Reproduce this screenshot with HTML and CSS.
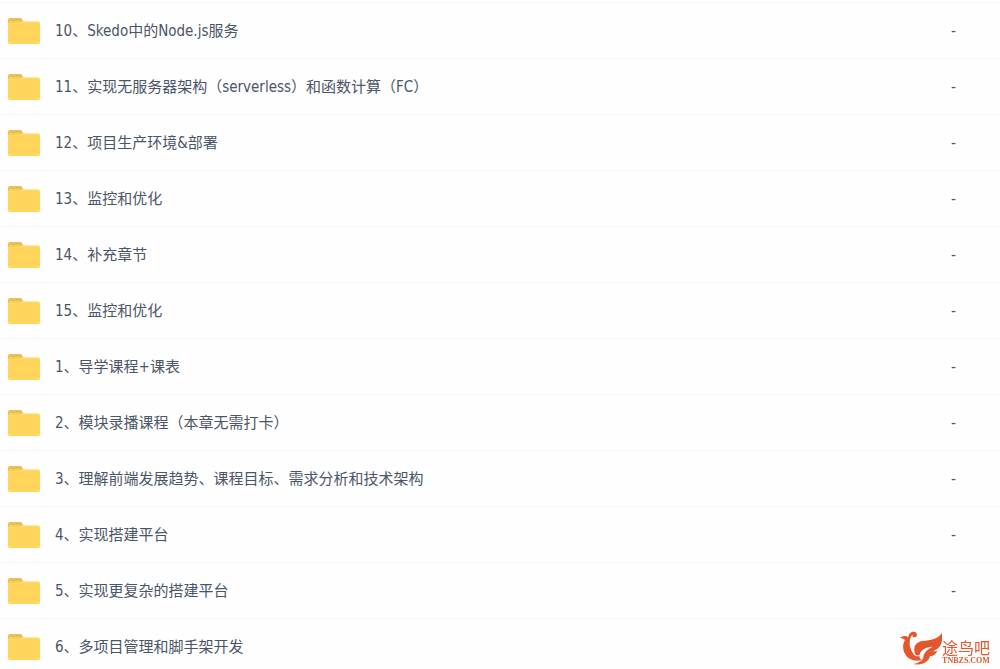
FILE: index.html
```html
<!DOCTYPE html>
<html lang="zh-CN">
<head>
    <meta charset="UTF-8">
    <meta name="viewport" content="width=device-width, initial-scale=1.0">
    <title>课程目录</title>
    <link rel="stylesheet" href="styles.css">
</head>
<body>
    <!-- Folder shape shared by all rows -->
    <svg class="sprite" aria-hidden="true">
        <symbol id="folder" viewBox="0 0 32 26">
            <path fill="#e6bf55" d="M0 8V2Q0 0 2 0H12Q13.500 0 14.200 1.400L15.500 4V8Z"/>
            <rect fill="#ffd55c" y="3.500" width="32" height="22.500" rx="2"/>
        </symbol>
    </svg>

    <table class="file-list">
        <tbody>
            <tr><td class="name"><a href="#"><svg class="folder"><use href="#folder"/></svg>10、Skedo中的Node.js服务</a></td><td class="size">-</td></tr>
            <tr><td class="name"><a href="#"><svg class="folder"><use href="#folder"/></svg>11、实现无服务器架构（serverless）和函数计算（FC）</a></td><td class="size">-</td></tr>
            <tr><td class="name"><a href="#"><svg class="folder"><use href="#folder"/></svg>12、项目生产环境&amp;部署</a></td><td class="size">-</td></tr>
            <tr><td class="name"><a href="#"><svg class="folder"><use href="#folder"/></svg>13、监控和优化</a></td><td class="size">-</td></tr>
            <tr><td class="name"><a href="#"><svg class="folder"><use href="#folder"/></svg>14、补充章节</a></td><td class="size">-</td></tr>
            <tr><td class="name"><a href="#"><svg class="folder"><use href="#folder"/></svg>15、监控和优化</a></td><td class="size">-</td></tr>
            <tr><td class="name"><a href="#"><svg class="folder"><use href="#folder"/></svg>1、导学课程+课表</a></td><td class="size">-</td></tr>
            <tr><td class="name"><a href="#"><svg class="folder"><use href="#folder"/></svg>2、模块录播课程（本章无需打卡）</a></td><td class="size">-</td></tr>
            <tr><td class="name"><a href="#"><svg class="folder"><use href="#folder"/></svg>3、理解前端发展趋势、课程目标、需求分析和技术架构</a></td><td class="size">-</td></tr>
            <tr><td class="name"><a href="#"><svg class="folder"><use href="#folder"/></svg>4、实现搭建平台</a></td><td class="size">-</td></tr>
            <tr><td class="name"><a href="#"><svg class="folder"><use href="#folder"/></svg>5、实现更复杂的搭建平台</a></td><td class="size">-</td></tr>
            <tr><td class="name"><a href="#"><svg class="folder"><use href="#folder"/></svg>6、多项目管理和脚手架开发</a></td><td class="size"></td></tr>
        </tbody>
    </table>

    <!-- Watermark -->
    <div class="watermark">
        <svg class="bird" viewBox="12 12 126 102" aria-hidden="true">
            <!-- head and body -->
            <path fill="#e4572e" d="M12 33C17 26 29 24 37 31C38 19 48 12 57 15C66 19 64 31 55 31C50 31 48 27 51 23C45 25 44 31 42 38C39 52 42 66 52 80C58 88 64 90 70 86C70 93 73 97 78 99C54 105 34 95 27 80C19 66 20 50 27 39C23 35 18 34 12 33Z"/>
            <!-- wing and tail -->
            <path fill="#e4572e" d="M57 80C50 60 60 44 80 42C104 40 126 36 138 18C142 46 133 66 110 72C115 74 120 73 124 71C120 82 112 86 102 87C98 105 80 116 50 111C67 109 80 102 82 90C84 78 92 68 110 59C88 61 74 68 71 83C66 87 60 86 57 80Z"/>
        </svg>
        <div class="brand">
            <span class="brand-name">途鸟吧</span>
            <span class="brand-url">TNBZS.COM</span>
        </div>
    </div>
</body>
</html>
```
FILE: styles.css
```css
body {
    margin: 0;
    padding-top: 2px;
    height: 100vh;
    box-sizing: border-box;
    overflow: hidden;
    background-color: #fefefe;
    color: #4a5568;
    font-family: "DejaVu Sans Condensed", "Noto Sans CJK SC", sans-serif;
    font-size: 15px;
    line-height: 20px;
}
.sprite {
    position: absolute;
    width: 0;
    height: 0;
}
.file-list {
    width: 100%;
    border-collapse: separate;
    border-spacing: 0;
}
.file-list td {
    height: 55px;
    padding: 0;
    border-top: 1px solid #f5f5f6;
}
.name a {
    display: flex;
    align-items: center;
    gap: 15px;
    padding-left: 8px;
    color: inherit;
    text-decoration: none;
}
.name a:hover {
    color: #09aaff;
}
.folder {
    width: 32px;
    height: 26px;
}
.file-list .size {
    width: 49px;
}
.watermark {
    position: fixed;
    right: 10px;
    bottom: 4px;
    display: flex;
    align-items: flex-end;
    color: #e4572e;
}
.bird {
    width: 42px;
    height: 34px;
}
.brand {
    display: flex;
    flex-direction: column;
    align-items: center;
    font-family: "Noto Sans CJK SC", sans-serif;
}
.brand-name {
    font-size: 16px;
    line-height: 20px;
}
.brand-url {
    font-family: "Liberation Serif", serif;
    font-size: 8px;
    font-weight: bold;
    line-height: 8px;
}
```
